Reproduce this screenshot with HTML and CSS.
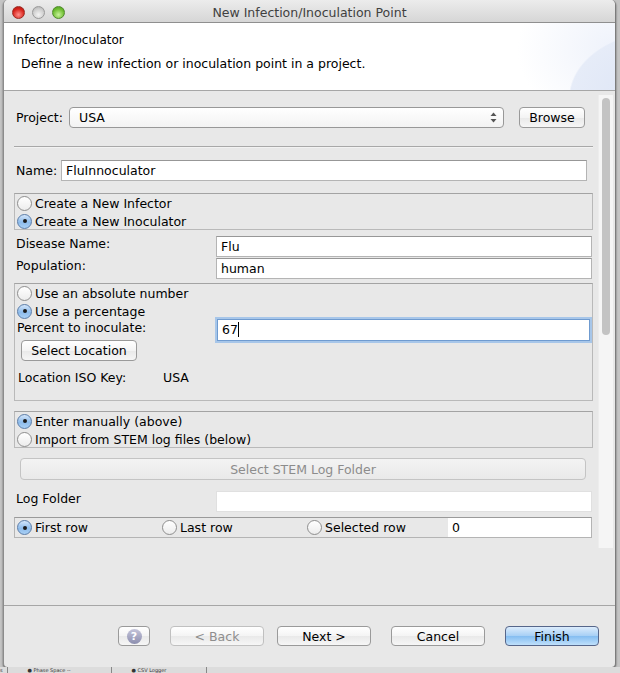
FILE: index.html
```html
<!DOCTYPE html>
<html lang="en">
  <head>
    <meta charset="UTF-8" />
    <meta name="viewport" content="width=device-width, initial-scale=1.0" />
    <title>New Infection/Inoculation Point</title>
    <link rel="stylesheet" href="styles.css">
  </head>
  <body>
    <div class="window">
      <div class="titlebar">
        <div class="lights">
          <span class="light red"></span>
          <span class="light grey"></span>
          <span class="light green"></span>
        </div>
        <div class="title">New Infection/Inoculation Point</div>
        <div></div>
      </div>

      <div class="header">
        <div class="header-title">Infector/Inoculator</div>
        <div class="header-desc">Define a new infection or inoculation point in a project.</div>
      </div>

      <div class="content">
        <div class="scroll">
          <div class="form">
            <div class="row project-row">
              <span class="lbl">Project:</span>
              <div class="combo">
                <span>USA</span>
                <svg class="arrows" width="7" height="11" viewBox="0 0 7 11">
                  <path d="M3.5 0.5 L6.5 4 L0.5 4 Z" fill="#555" />
                  <path d="M3.5 10.5 L6.5 7 L0.5 7 Z" fill="#555" />
                </svg>
              </div>
              <button class="btn browse">Browse</button>
            </div>

            <div class="sep"></div>

            <div class="row name-row">
              <span class="lbl">Name:</span>
              <div class="input grow">FluInnoculator</div>
            </div>

            <div class="group group-type">
              <div class="radio-row"><span class="radio"></span>Create a New Infector</div>
              <div class="radio-row"><span class="radio on"></span>Create a New Inoculator</div>
            </div>

            <div class="field first">
              <span class="lbl">Disease Name:</span>
              <div class="input">Flu</div>
            </div>
            <div class="field">
              <span class="lbl">Population:</span>
              <div class="input">human</div>
            </div>

            <div class="group group-amount">
              <div class="radio-row"><span class="radio"></span>Use an absolute number</div>
              <div class="radio-row"><span class="radio on"></span>Use a percentage</div>
              <div class="field percent">
                <span class="lbl">Percent to inoculate:</span>
                <div class="input focus">67<span class="caret"></span></div>
              </div>
              <button class="btn location">Select Location</button>
              <div class="iso-row">
                <span class="iso-lbl">Location ISO Key:</span>
                <span>USA</span>
              </div>
            </div>

            <div class="group group-source">
              <div class="radio-row"><span class="radio on"></span>Enter manually (above)</div>
              <div class="radio-row"><span class="radio"></span>Import from STEM log files (below)</div>
            </div>

            <button class="btn wide" disabled>Select STEM Log Folder</button>

            <div class="field log">
              <span class="lbl">Log Folder</span>
              <div class="input"></div>
            </div>

            <div class="rowbox">
              <div class="radio-row cell"><span class="radio on"></span>First row</div>
              <div class="radio-row cell"><span class="radio"></span>Last row</div>
              <div class="radio-row cell"><span class="radio"></span>Selected row</div>
              <div class="row-input">0</div>
            </div>
          </div>

          <div class="scrollbar">
            <div class="thumb"></div>
          </div>
        </div>
      </div>

      <div class="footer">
        <button class="btn help"><span class="help-icon">?</span></button>
        <button class="btn nav back" disabled>&lt; Back</button>
        <button class="btn nav next">Next &gt;</button>
        <button class="btn nav cancel">Cancel</button>
        <button class="btn nav finish">Finish</button>
      </div>
    </div>

    <div class="tabs">
      <span class="tab first">s</span>
      <span class="tab">&#9679; Phase Space --</span>
      <span class="tab">&#9679; CSV Logger</span>
    </div>
  </body>
</html>
```

FILE: styles.css
```css
body {
  margin: 0;
  background-color: #c4c4c4;
  font-family: "DejaVu Sans", Verdana, sans-serif;
  font-size: 12.5px;
  color: #000;
  overflow: hidden;
}

.window {
  margin-left: 3px;
  width: 613px;
  height: 667px;
  box-sizing: border-box;
  border-left: 1px solid #8c8c8c;
  border-right: 1px solid #7c7c7c;
  border-radius: 5px 5px 4px 4px;
  background-color: #e8e8e8;
  overflow: hidden;
  box-shadow: 0 1px 2px rgba(0, 0, 0, 0.6);
}

/* title bar */
.titlebar {
  height: 22px;
  border-bottom: 1px solid #8f8f8f;
  background: linear-gradient(#ececec, #d6d6d6);
  display: grid;
  grid-template-columns: 1fr auto 1fr;
  align-items: center;
}

.lights {
  display: flex;
  gap: 7px;
  padding-left: 8px;
  padding-top: 2px;
}

.light {
  width: 13px;
  height: 13px;
  border-radius: 50%;
  box-sizing: border-box;
}

.red {
  background: radial-gradient(circle at 50% 70%, #ff8f8a, #d8241c 60%, #a81810);
  border: 1px solid #9c2a22;
}

.grey {
  background: radial-gradient(circle at 50% 70%, #f4f4f4, #cdcdcd 60%, #a9a9a9);
  border: 1px solid #9a9a9a;
}

.green {
  background: radial-gradient(circle at 50% 70%, #c8f29a, #6fbe32 60%, #4a9a1c);
  border: 1px solid #4f8a2c;
}

.title {
  color: #404040;
  font-size: 12.5px;
  padding-top: 2px;
}

/* wizard header */
.header {
  height: 67px;
  border-bottom: 1px solid #a6a6a6;
  background:
    radial-gradient(170px 120px at 108% 112%, #dbe3f5 0%, #e6ecf8 55%, rgba(255, 255, 255, 0) 56%),
    radial-gradient(140px 110px at 100% 40%, #eef2fb 0%, rgba(255, 255, 255, 0) 70%),
    #fff;
}

.header-title {
  padding: 10px 0 0 9px;
  height: 14px;
  line-height: 14px;
  font-size: 12px;
}

.header-desc {
  padding: 9px 0 0 17px;
  font-size: 12.5px;
  line-height: 16px;
}

/* scrolling form */
.content {
  height: 514px;
  padding-top: 4px;
  box-sizing: border-box;
}

.scroll {
  display: flex;
  height: 453px;
}

.form {
  flex: 1;
  padding: 11px 5px 0 10px;
}

.scrollbar {
  width: 15px;
  margin-right: 2px;
  background-color: #f5f5f5;
  border-left: 1px solid #ededed;
  padding-top: 3px;
  box-sizing: border-box;
}

.thumb {
  width: 8px;
  height: 237px;
  margin-left: 3px;
  border-radius: 4px;
  background-color: #c3c3c3;
}

.row {
  display: flex;
  align-items: center;
}

.lbl {
  padding-left: 2px;
}

.project-row {
  height: 22px;
}

.project-row .lbl {
  width: 53px;
}

.combo {
  width: 435px;
  height: 21px;
  box-sizing: border-box;
  border: 1px solid #989898;
  border-radius: 4px;
  background: linear-gradient(#ffffff, #f3f3f3);
  display: flex;
  align-items: center;
  justify-content: space-between;
  padding: 0 6px 0 9px;
}

.browse {
  margin-left: 15px;
  width: 66px;
  height: 21px;
}

.sep {
  margin-top: 18px;
  border-top: 1px solid #a8a8a8;
  border-bottom: 1px solid #f2f2f2;
}

.name-row {
  margin-top: 12px;
  height: 21px;
}

.name-row .lbl {
  width: 45px;
}

.input {
  height: 21px;
  box-sizing: border-box;
  border: 1px solid #b4b4b4;
  border-top-color: #979797;
  background-color: #fff;
  padding: 0 4px;
  line-height: 19px;
}

.grow {
  flex: 1;
  margin-right: 6px;
}

.input.focus {
  border-color: #6f9bd0;
  box-shadow: 0 0 0 2px #a7c6e9;
  height: 22px;
  line-height: 20px;
}

.caret {
  display: inline-block;
  width: 1px;
  height: 15px;
  background-color: #000;
  vertical-align: -3px;
}

/* groups with radio buttons */
.group {
  border: 1px solid #b9b9b9;
  border-top-color: #a3a3a3;
  padding-left: 1px;
}

.group-type {
  margin-top: 12px;
  height: 35px;
}

.radio-row {
  display: flex;
  align-items: center;
  height: 18px;
}

.radio {
  width: 15px;
  height: 15px;
  box-sizing: border-box;
  border-radius: 50%;
  border: 1px solid #8e8e8e;
  background: linear-gradient(#ffffff, #ececec);
  margin: 0 3px 0 1px;
  position: relative;
}

.radio.on {
  border-color: #5a7ca8;
  background: linear-gradient(#d4e6fa, #8dbbeb 55%, #a9d0f5);
}

.radio.on::after {
  content: "";
  position: absolute;
  left: 4.5px;
  top: 4.5px;
  width: 4px;
  height: 4px;
  border-radius: 50%;
  background-color: #1c1c1c;
}

.field {
  display: grid;
  grid-template-columns: 202px 1fr;
  height: 21px;
  align-items: start;
}

.field .lbl {
  line-height: 15px;
}

.field .input {
  margin-right: 1px;
}

.field.first {
  margin-top: 6px;
}

.field.first + .field {
  margin-top: 1px;
}

.group-amount {
  margin-top: 4px;
  height: 116px;
}

.field.percent {
  margin-top: -1px;
  height: 22px;
  grid-template-columns: 201px 1fr;
}

.field.percent .lbl {
  padding: 2px 0 0 1px;
  line-height: 14px;
}

.field.percent .input {
  margin-right: 2px;
}

.location {
  margin: -1px 0 0 5px;
  width: 116px;
  height: 21px;
}

.iso-row {
  display: flex;
  height: 18px;
  align-items: center;
  margin-top: 7px;
  padding-left: 2px;
}

.iso-lbl {
  width: 145px;
}

.group-source {
  margin-top: 10px;
  height: 35px;
}

.btn {
  font-family: "DejaVu Sans", Verdana, sans-serif;
  font-size: 12.5px;
  color: #000;
  padding: 0;
  border: 1px solid #9a9a9a;
  border-radius: 4px;
  background: linear-gradient(#ffffff, #f4f4f4 50%, #e9e9e9 51%, #f6f6f6);
}

.btn.wide {
  display: block;
  margin: 10px 7px 0 6px;
  width: calc(100% - 13px);
  height: 22px;
  color: #8c8c8c;
  border-color: #c4c4c4;
  background: linear-gradient(#f3f3f3, #e9e9e9);
}

.field.log {
  margin-top: 11px;
}

.field.log .lbl {
  line-height: 16px;
}

.field.log .input {
  border-color: #e0e0e0;
}

.rowbox {
  margin-top: 5px;
  height: 21px;
  box-sizing: border-box;
  border: 1px solid #b4b4b4;
  border-top-color: #9a9a9a;
  display: flex;
  align-items: center;
  margin-right: 1px;
}

.rowbox .cell {
  width: 144px;
  padding-left: 1px;
}

.rowbox .cell:nth-child(3) {
  width: 142px;
}

.row-input {
  flex: 1;
  height: 19px;
  background-color: #fff;
  line-height: 19px;
  padding-left: 4px;
}

/* footer buttons */
.footer {
  height: 61px;
  border-top: 1px solid #a6a6a6;
  display: flex;
  justify-content: flex-end;
  align-items: flex-start;
  padding: 20px 16px 0 0;
  box-sizing: border-box;
}

.nav {
  width: 94px;
  height: 20px;
  margin-left: 20px;
}

.next {
  margin-left: 13px;
}

.back {
  color: #8e8e8e;
  border-color: #c0c0c0;
}

.finish {
  border-color: #56668a;
  background: linear-gradient(#dcecfc, #a6cff5 50%, #84bdf1 51%, #bfe0fb);
}

.help {
  width: 32px;
  height: 20px;
  display: flex;
  align-items: center;
  justify-content: center;
}

.help-icon {
  width: 15px;
  height: 15px;
  border-radius: 50%;
  background: linear-gradient(#c4c4da, #8c8eae);
  color: #fff;
  font-weight: bold;
  font-size: 11px;
  line-height: 15px;
  text-align: center;
}

/* backdrop strip under the dialog */
.tabs {
  height: 6px;
  overflow: hidden;
  display: flex;
  align-items: center;
  background-color: #dcdcdc;
  font-size: 5px;
  line-height: 6px;
  color: #333;
}

.tab {
  border-right: 1px solid #888;
  padding: 0 40px 0 20px;
}

.tab.first {
  padding: 0 4px 0 0;
}
```
